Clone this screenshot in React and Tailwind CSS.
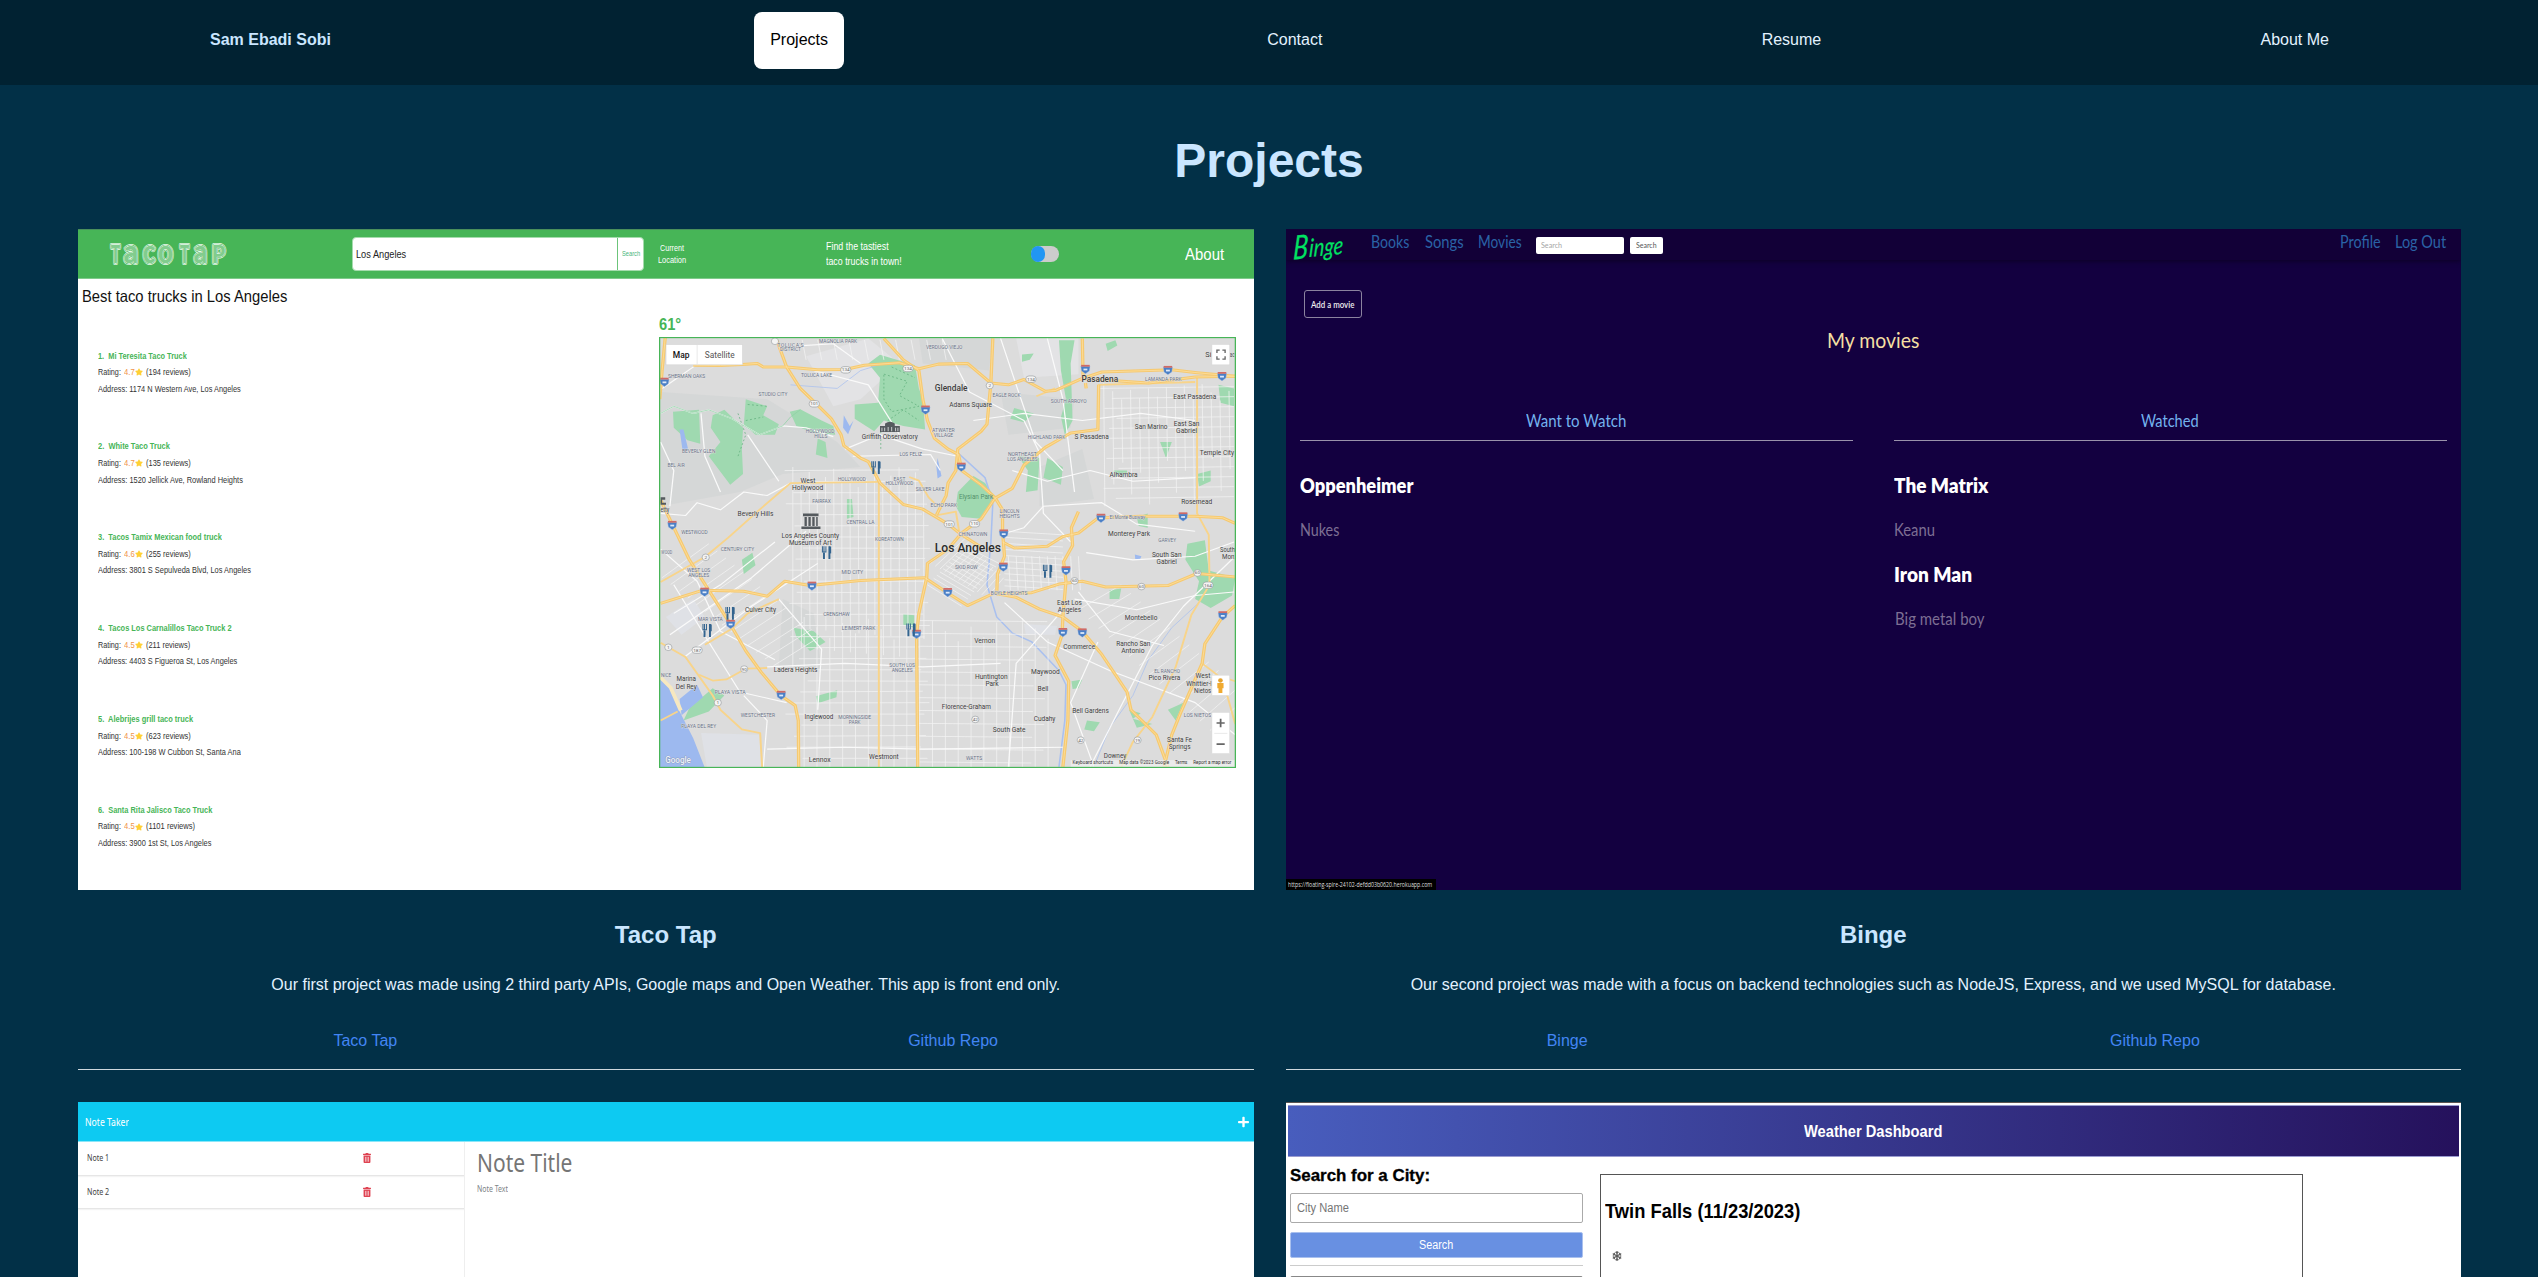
import { useLayoutEffect, useRef, useState } from "react";
import { FaStar, FaSnowflake, FaPlus, FaTrashAlt } from "react-icons/fa";

/* Single line of text condensed or widened to an exact width. */
function Fit({ w, className = "", children }) {
  const ref = useRef(null);
  const [scale, setScale] = useState(1);
  useLayoutEffect(() => {
    const natural = ref.current.offsetWidth;
    if (natural) setScale(w / natural);
  }, [w]);
  return (
    <span className={"block shrink-0 whitespace-pre " + className} style={{ width: w }}>
      <span ref={ref} className="inline-block origin-left align-top" style={{ transform: `scaleX(${scale})` }}>
        {children}
      </span>
    </span>
  );
}

/* ---------- Map drawing ---------- */

const freeways = [
  "M24 500 L30 420 L38 328",
  "M110 405 L180 406 L236 403 L275 400 L290 410 L350 410 L430 418 L500 417 L550 405 L640 398 L690 415 L740 402 L815 400 L875 455 L920 460 L960 445 L1015 478 L1040 476 L1110 442 L1160 424 L1340 418 L1405 426 L1503 436",
  "M1110 442 L1280 455 L1400 438 L1503 436",
  "M325 335 L350 410 L385 470 L425 512 L465 555 L490 600 L497 630 L540 665 L560 675 L590 735 L650 795 L700 808 L765 850 L800 880 L850 915",
  "M600 330 L650 390 L690 420 L700 500 L712 560 L730 610 L765 640 L792 655 L800 700 L850 740 L885 775 L905 810 L905 870 L910 940 L892 990 L890 1045 L940 1055 L1000 1088 L1060 1110 L1110 1150 L1160 1215 L1225 1320 L1235 1370 L1300 1440 L1330 1530",
  "M880 330 L875 455 L865 570 L850 590 L790 640 L785 700 L765 735 L760 770 L735 825",
  "M1110 330 L1112 440 M1118 455 L1120 470",
  "M1152 460 L1150 585 L1080 595 L1015 635 L960 685 L930 750 L885 778 L850 835 L800 875 L765 920 L712 960 L710 1000 L690 1100 L684 1160 L687 1530",
  "M26 1072 L135 1035 L240 1038 L300 1052 L345 1010 L410 1022 L540 1008 L705 1000 L760 1040 L815 1078 L880 1045",
  "M905 900 L935 917 L1020 912 L1060 885 L1100 875 L1150 833 L1260 828 L1400 828 L1470 832 L1503 848",
  "M890 1045 L980 1042 L1050 1018 L1110 1010 L1170 1026 L1330 1022 L1405 988 L1503 998",
  "M26 782 L58 855 L100 950 L150 1035 L205 1130 L245 1205 L285 1265 L335 1330 L372 1358 L380 1400 L381 1530",
  "M1100 815 L1082 860 L1085 910 L1062 955 L1068 1010 L1060 1110 L1058 1160 L1040 1218 L1075 1290 L1073 1400 L1060 1530",
  "M1503 1078 L1470 1110 L1425 1185 L1418 1240 L1362 1380 L1340 1440 L1320 1530",
];
const arterials = [
  "M1405 440 L1405 820 L1435 880 L1437 1020 L1390 1105 L1350 1250 L1290 1390 L1240 1460 L1210 1530",
  "M26 1182 L90 1222 L160 1330 L180 1370 L235 1425 L282 1435 L287 1530",
  "M125 1272 L160 1288 L195 1285 L245 1255 L300 1253",
  "M140 1188 L210 1142 L250 1100 L330 1060",
  "M587 732 L587 1530",
  "M26 1012 L140 942 L200 888 L280 810 L360 735 L590 732",
  "M665 718 L690 728 L715 775 L738 800 M738 825 L785 815 L795 880",
  "M1150 460 L1400 452",
  "M26 1400 L70 1375 M1418 1240 L1460 1275 L1503 1290",
  "M992 492 L1040 470",
  "M1480 1320 L1503 1410",
];
const whiteRoads = [
  "M26 540 L60 520 L110 540 L150 530 L210 555 L280 600 L340 575 L400 580 L470 605",
  "M390 350 L470 345 L540 400 M30 470 L130 395 M420 420 L560 460 L640 600",
  "M500 640 L590 600 L700 640 L790 660 M520 660 L720 655 L745 700",
  "M26 820 L90 826 L120 790 L180 810 L240 760 L300 770 L360 735",
  "M26 620 L60 700 L50 800 M130 540 L140 660 L180 760 M250 600 L330 730",
  "M750 330 L820 480 L960 560 L1000 650 M900 330 L940 460 L990 620 L1060 700",
  "M830 560 L960 540 L1110 560 L1260 540 L1400 560 M1020 330 L1060 500 L1090 760",
  "M930 700 L1020 730 L1130 700 L1240 730 L1400 720 M1000 650 L1010 820 L1080 900",
  "M900 880 L960 860 L1010 800 L1160 790 L1250 850 L1400 870",
  "M1120 930 L1240 950 L1400 940 L1500 900 M1090 1060 L1250 1090 L1400 1050 L1500 1040",
  "M910 1070 L1020 1180 L1180 1260 L1400 1350 L1503 1440 M1100 1040 L1180 1150 L1320 1190",
  "M1060 1090 L940 1240 L920 1530 M1150 1180 L1080 1350 L1140 1530",
  "M1130 1530 L1200 1380 L1290 1190 L1370 1080 L1503 940",
  "M26 920 L120 1010 L180 1150 L320 1230 M60 1020 L150 1180 L230 1320 L350 1350",
  "M60 1100 L180 1020 L320 900 M50 1160 L260 1000 L400 870 M90 1220 L260 1080 L430 960",
  "M330 1060 L440 1200 L430 1370 M300 1250 L500 1240 L700 1250 L900 1240",
  "M240 1330 L300 1400 L290 1530 M300 1480 L500 1475 L700 1480 L1060 1475",
];

function lines(list) {
  return list.map(([x1, y1, x2, y2]) => `M${x1} ${y1} L${x2} ${y2}`).join(" ");
}
const grid = [];
for (let i = 0; i < 17; i++) {
  const x = 366 + i * 21;
  grid.push([x, 690 + ((i * 37) % 60), x + (i % 3), 1250 - ((i * 53) % 110)]);
}
for (let i = 0; i < 20; i++) {
  const x = 395 + i * 33;
  grid.push([x, 1110 + ((i * 29) % 70), x, 1530]);
}
for (let i = 0; i < 27; i++) {
  const y = 700 + i * 31;
  grid.push([345 + ((i * 41) % 60), y, 690 + ((i * 17) % 30), y + (i % 4) - 2]);
}
for (let i = 0; i < 12; i++) {
  const y = 1120 + i * 36;
  grid.push([690, y, 1020 - ((i * 31) % 60), y + 3]);
}
for (let i = 0; i < 15; i++) {
  grid.push([1165 + i * 23, 455 + ((i * 23) % 50), 1168 + i * 23, 800 - ((i * 61) % 150)]);
}
for (let i = 0; i < 12; i++) {
  grid.push([1155 + ((i * 31) % 50), 470 + i * 28, 1500, 465 + i * 28]);
}
for (let i = 0; i < 13; i++) {
  grid.push([720 + i * 12, 960 + i * 8, 800 + i * 9, 880 + i * 10]);
  grid.push([712 + i * 8, 1020 - i * 9, 800 + i * 8, 1080 - i * 10]);
}
for (let i = 0; i < 14; i++) {
  grid.push([30 + i * 22, 1000 + i * 19, 150 + i * 22, 905 + i * 20]);
  grid.push([1100 + i * 26, 1090 + i * 26, 1210 + i * 25, 1020 + i * 24]);
}
for (let i = 0; i < 10; i++) {
  grid.push([390 + i * 40, 334, 400 + i * 40, 390]);
  grid.push([920 + i * 20, 940, 925 + i * 20, 1035]);
  grid.push([910, 870 + i * 17, 1060, 880 + i * 17]);
}

const towns = [
  [1155, 451, "Pasadena", 94, 25, 1], [773, 478, "Glendale", 84, 25, 1], [823, 523, "Adams Square", 110],
  [1399, 499, "East Pasadena", 110], [1287, 585, "San Marino", 84], [1378, 574, "East San", 66], [1378, 595, "Gabriel", 54],
  [1134, 613, "S Pasadena", 88], [1456, 657, "Temple City", 88], [1216, 718, "Alhambra", 72], [1404, 793, "Rosemead", 80],
  [405, 735, "West", 38], [404, 755, "Hollywood", 80], [270, 828, "Beverly Hills", 92], [411, 889, "Los Angeles County", 148],
  [411, 909, "Museum of Art", 110], [615, 612, "Griffith Observatory", 144], [1230, 884, "Monterey Park", 108],
  [1327, 942, "South San", 76], [1327, 961, "Gabriel", 52], [1483, 927, "South", 38], [1485, 947, "Mon", 32],
  [283, 1095, "Culver City", 80], [1077, 1077, "East Los", 64], [1077, 1097, "Angeles", 60], [1261, 1118, "Montebello", 84],
  [859, 1182, "Vernon", 54], [1102, 1199, "Commerce", 82], [1241, 1192, "Rancho San", 88], [1240, 1212, "Antonio", 60],
  [373, 1264, "Ladera Heights", 112], [1015, 1270, "Maywood", 74], [1009, 1316, "Bell", 28], [876, 1284, "Huntington", 84],
  [878, 1304, "Park", 34], [92, 1290, "Marina", 50], [92, 1311, "Del Rey", 54], [1321, 1287, "Pico Rivera", 82],
  [1420, 1282, "West", 38], [1410, 1303, "Whittier-l", 66], [1419, 1323, "Nietos", 44], [812, 1368, "Florence-Graham", 126],
  [1131, 1378, "Bell Gardens", 94], [1013, 1401, "Cudahy", 56], [922, 1432, "South Gate", 84], [433, 1397, "Inglewood", 74],
  [435, 1517, "Lennox", 56], [600, 1507, "Westmont", 76], [1360, 1460, "Santa Fe", 64], [1360, 1480, "Springs", 56],
  [1194, 1506, "Downey", 58], [1434, 381, "Si", 16], [1495, 381, "ac", 12], [37, 817, "etty", 22],
];
const hoods = [
  [360, 354, "TOLUCA'S", 68], [360, 366, "DISTRICT", 54], [482, 344, "MAGNOLIA PARK", 98], [755, 361, "VERDUGO VIEJO", 94],
  [93, 442, "SHERMAN OAKS", 96], [427, 437, "TOLUCA LAKE", 80], [315, 490, "STUDIO CITY", 74], [915, 493, "EAGLE ROCK", 72],
  [1318, 448, "LAMANDA PARK", 94], [1075, 511, "SOUTH ARROYO", 92], [436, 595, "HOLLYWOOD", 74], [438, 608, "HILLS", 34],
  [753, 592, "ATWATER", 58], [753, 606, "VILLAGE", 50], [1018, 612, "HIGHLAND PARK", 96], [124, 652, "BEVERLY GLEN", 86],
  [66, 691, "BEL AIR", 44], [669, 659, "LOS FELIZ", 58], [956, 659, "NORTHEAST", 74], [956, 673, "LOS ANGELES", 78],
  [518, 728, "HOLLYWOOD", 72], [640, 728, "EAST", 30], [640, 741, "HOLLYWOOD", 72], [719, 757, "SILVER LAKE", 74],
  [440, 791, "FAIRFAX", 48], [754, 802, "ECHO PARK", 68], [540, 851, "CENTRAL LA", 72], [923, 819, "LINCOLN", 50],
  [923, 832, "HEIGHTS", 52], [113, 877, "WESTWOOD", 68], [829, 883, "CHINATOWN", 74], [614, 896, "KOREATOWN", 74],
  [224, 926, "CENTURY CITY", 86], [1328, 900, "GARVEY", 46], [42, 935, "WOOD", 28], [812, 976, "SKID ROW", 58],
  [519, 989, "MID CITY", 56], [124, 984, "WEST LOS", 60], [124, 997, "ANGELES", 54], [922, 1048, "BOYLE HEIGHTS", 94],
  [478, 1106, "CRENSHAW", 68], [154, 1122, "MAR VISTA", 64], [535, 1146, "LEIMERT PARK", 86], [647, 1249, "SOUTH LOS", 66],
  [647, 1263, "ANGELES", 54], [1328, 1266, "EL RANCHO", 66], [205, 1325, "PLAYA VISTA", 80], [276, 1389, "WESTCHESTER", 88],
  [525, 1396, "MORNINGSIDE", 84], [525, 1409, "PARK", 30], [1406, 1390, "LOS NIETOS", 70], [124, 1420, "PLAYA DEL REY", 90],
  [832, 1511, "WATTS", 42], [1226, 836, "El Monte Busway", 92], [40, 1277, "NICE", 26],
];
const shields = [
  [36, 452], [1118, 416], [1330, 419], [1469, 436], [707, 530], [799, 690], [56, 853], [908, 877], [907, 970], [1158, 833],
  [1369, 829], [1068, 980], [139, 1040], [415, 1023], [764, 1041], [206, 1130], [684, 1158], [1060, 1153], [1110, 1154],
  [1471, 1106], [336, 1329],
];
const badges = [
  [320, 338, ""], [502, 418, "134"], [662, 414, "134"], [872, 462, "2"], [978, 444, "134"], [421, 513, "101"], [768, 850, "101"],
  [833, 849, "110"], [142, 943, "2"], [1406, 987, "60"], [1090, 1009, "60"], [1262, 1025, "60"], [1433, 1021, "164"],
  [46, 1195, "1"], [120, 1203, "187"], [241, 1256, "90"], [173, 1350, "1"], [835, 1397, "42"], [1106, 1455, "42"], [1252, 1455, "19"],
];
const forks = [[580, 692], [453, 930], [1021, 982], [205, 1100], [146, 1148], [670, 1146]];

function TacoMap() {
  return (
    <svg
      className="block h-[431px] w-[577px]"
      viewBox="22 326 1483 1207"
      preserveAspectRatio="none"
      fontFamily='Roboto, "Liberation Sans", sans-serif'
      textAnchor="middle"
    >
      <rect x="22" y="326" width="1483" height="1207" fill="#dcdcdc" />
      <g fill="#d5d7d7">
        <path d="M26 480 L300 500 L480 620 L540 690 L340 710 L230 760 L26 800Z" />
        <path d="M690 330 L880 330 L870 420 L700 400Z M900 480 L1090 500 L1080 580 L920 600Z M1000 690 L1110 640 L1140 780 L1000 800Z" />
        <path d="M340 1060 L420 1100 L440 1260 L330 1250Z" />
      </g>
      <g fill="#e3e3e5">
        <path d="M400 380 L560 330 L640 400 L540 500 L470 520Z M940 330 L1100 330 L1100 430 L960 440Z" />
      </g>
      <g fill="#dfe1e6">
        <path d="M130 1435 L280 1440 L285 1530 L145 1530Z M40 1110 L110 1060 L140 1110 L80 1160Z M960 1130 L1045 1135 L1040 1160 L965 1160Z" />
      </g>
      <g fill="#9fd9b0">
        <path d="M560 400 L590 376 L680 405 L690 470 L700 500 L706 585 L650 575 L600 560 L575 590 L525 555 L525 515 L585 510 L590 440Z" />
        <path d="M58 535 L125 530 L128 625 L95 615 L60 580Z M160 545 L190 530 L238 580 L235 640 L238 710 L205 740 L150 660 L180 620 L155 580Z" />
        <path d="M245 500 L300 520 L290 545 L330 570 L320 600 L270 600 L240 570Z M358 535 L385 528 L440 560 L470 575 L475 600 L420 595 L375 575Z M430 610 L450 620 L455 665 L425 655Z" />
        <path d="M790 760 L830 715 L860 735 L885 775 L850 835 L800 830 L785 800Z" />
        <path d="M1050 335 L1090 335 L1080 400 L1085 560 L1065 600 L1055 550 L1068 500 L1055 420Z" />
        <path d="M945 660 L1000 665 L995 755 L965 760 L970 700Z M1020 665 L1060 690 L1055 740 L1010 720Z M935 525 L985 540 L960 565 L925 555Z" />
        <path d="M1380 905 L1425 895 L1435 980 L1503 1000 L1495 1050 L1440 1085 L1400 1060 L1410 1010 L1375 950Z" />
        <path d="M1460 460 L1500 470 L1500 520 L1465 510Z M1310 620 L1340 620 L1325 665Z M1250 830 L1278 820 L1278 860 L1255 855Z M1180 1035 L1210 1030 L1205 1060 L1180 1060Z M1405 710 L1440 700 L1440 730 L1410 745Z" />
        <path d="M235 950 L262 930 L270 965 L240 990Z M650 1102 L678 1105 L678 1140 L650 1132Z M100 1365 L160 1310 L190 1330 L150 1375 L85 1400Z M368 1140 L420 1150 L450 1180 L420 1200 L410 1205 L375 1165Z" />
        <path d="M1122 1400 L1155 1405 L1140 1430 L1115 1425Z M425 1332 L480 1315 L478 1335 L430 1352Z M1082 1290 L1110 1285 L1100 1310 L1085 1312Z M1330 1370 L1370 1350 L1350 1400Z M1240 1395 L1290 1410 L1250 1420Z" />
        <path d="M1170 345 L1195 335 L1200 350 L1175 365Z M955 375 L985 372 L975 390 L955 395Z M505 780 L518 780 L522 830 L505 835Z M1190 700 L1225 700 L1225 712 L1190 715Z M1230 1370 L1260 1380 L1240 1395Z" />
      </g>
      <g fill="none" stroke="#5fae7c" strokeWidth="2" strokeDasharray="5 6">
        <path d="M600 430 L660 450 L640 490 L690 520 L620 535 L600 500Z M620 410 L680 440 M610 560 L650 530 L690 560 M592 590 L592 640" />
        <path d="M250 515 L300 520 M245 560 L290 550 M225 540 L245 600 L225 660" />
      </g>
      <g fill="#9db9ef">
        <path d="M22 1280 L50 1310 L75 1375 L110 1450 L140 1533 L22 1533Z" />
        <path d="M75 1340 L120 1300 L135 1335 L80 1385Z M75 585 L85 585 L98 645 L82 640Z M497 545 L512 575 L522 560 L508 598 L495 580Z M738 665 L748 715 L738 722 L735 690Z M1245 935 L1262 940 L1258 950 L1246 948Z" />
      </g>
      <path d="M22 1275 L52 1308 L78 1372" fill="none" stroke="#f7e8c0" strokeWidth="10" />
      <g fill="none" stroke="#a9c0ef" strokeWidth="4">
        <path d="M790 650 L860 720 L880 790 L875 900 L865 1020 L890 1110 L930 1155 L980 1180 L1050 1260 L1068 1300 L1065 1400 L1050 1530" />
        <path d="M1410 1070 L1340 1140 L1280 1230 L1240 1330 L1180 1420 L1140 1530 M360 460 L480 470 L540 420 L600 400" strokeWidth="2" />
      </g>
      <path d={lines(grid)} fill="none" stroke="#f3f3f3" strokeWidth="2" />
      <g fill="none" stroke="#fafafa" strokeWidth="3.2" strokeLinejoin="round">
        {whiteRoads.map((d) => <path key={d} d={d} />)}
      </g>
      <path d="M26 540 L60 520 L110 540 L150 530 L210 555 L280 600 L340 575 L360 550 L385 530" fill="none" stroke="#8fd2a5" strokeWidth="2" />
      <g fill="none" stroke="#f8d48a" strokeWidth="5" strokeLinejoin="round">
        {arterials.map((d) => <path key={d} d={d} />)}
      </g>
      <g fill="none" stroke="#f6c970" strokeWidth="8.5" strokeLinejoin="round">
        {freeways.map((d) => <path key={d} d={d} />)}
      </g>
      <g fill="none" stroke="#fde2a2" strokeWidth="2" strokeLinejoin="round">
        {freeways.map((d) => <path key={d} d={d} />)}
      </g>

      {badges.map(([x, y, t]) => (
        <g key={x + "-" + y}>
          <rect x={x - (t.length > 2 ? 13 : 9)} y={y - 9} width={t.length > 2 ? 26 : 18} height="18" rx="8" fill="#f4f4f4" stroke="#8a8f94" strokeWidth="1.5" />
          <text x={x} y={y + 4} fontSize="12" fill="#666">{t}</text>
        </g>
      ))}
      {shields.map(([x, y]) => (
        <g key={x + "-" + y}>
          <path d={`M${x - 12} ${y - 8} L${x + 12} ${y - 8} L${x + 10} ${y + 5} L${x} ${y + 13} L${x - 10} ${y + 5}Z`} fill="#4a7fc6" stroke="#b9cbe6" strokeWidth="1" />
          <path d={`M${x - 11} ${y - 12} h22 v5 h-22Z`} fill="#cf6a66" />
          <path d={`M${x - 5} ${y + 1} h10`} stroke="#dfe9f8" strokeWidth="5" />
        </g>
      ))}
      {forks.map(([x, y]) => (
        <g key={x + "-" + y} fill="none" stroke="#33648f" strokeWidth="5">
          <path d={`M${x - 7} ${y} V${y + 18} M${x + 7} ${y - 18} V${y + 18}`} />
          <path d={`M${x - 11} ${y - 18} V${y - 2} H${x - 2} V${y - 18} M${x - 7} ${y - 18} V${y}`} strokeWidth="2.6" />
          <path d={`M${x + 9} ${y - 17} V${y + 2}`} strokeWidth="5" />
        </g>
      ))}
      <g fill="#555a5e">
        <path d="M392 820 H432 V828 H392Z M396 830 H402 V855 H396Z M406 830 H412 V855 H406Z M416 830 H422 V855 H416Z M426 830 H430 V855 H426Z M388 857 H437 V864 H388Z" />
        <path d="M590 575 H603 V568 Q616 558 628 568 V575 H641 V592 H590Z" />
        <path d="M26 775 H38 V782 H30 V790 H40 V796 H26Z" />
      </g>
      <path d="M595 580 V590 M602 580 V590 M611 578 V590 M620 578 V590 M630 580 V590 M636 580 V590" stroke="#cfd2d4" strokeWidth="2.5" />

      <g fill="#687186" stroke="#e6e6e6" strokeWidth="2" paintOrder="stroke" fontSize="13.5">
        {hoods.map(([x, y, t, w]) => (
          <text key={x + t} x={x} y={y} textLength={w} lengthAdjust={w / t.length < 8.5 ? "spacingAndGlyphs" : "spacing"}>{t}</text>
        ))}
      </g>
      <g fill="#3c3c3c" stroke="#e6e6e6" strokeWidth="2" paintOrder="stroke">
        {towns.map(([x, y, t, w, s, b]) => (
          <text key={x + t} x={x} y={y} textLength={w} lengthAdjust="spacingAndGlyphs" fontSize={s || 21} fontWeight={b ? 500 : 400}>{t}</text>
        ))}
        <text x="816" y="929" textLength="170" lengthAdjust="spacingAndGlyphs" fontSize="36" fontWeight="500" fill="#2c2c2c">Los Angeles</text>
      </g>
      <text x="837" y="779" textLength="88" lengthAdjust="spacingAndGlyphs" fontSize="21" fill="#55916c">Elysian Park</text>

      <rect x="40" y="347" width="197" height="57" fill="#fff" stroke="#cfcfcf" strokeWidth="1.5" />
      <path d="M120 348 V403" stroke="#e2e2e2" strokeWidth="2" />
      <text x="79" y="384" textLength="43" lengthAdjust="spacingAndGlyphs" fontSize="27" fontWeight="500" fill="#111">Map</text>
      <text x="178" y="384" textLength="77" lengthAdjust="spacingAndGlyphs" fontSize="27" fill="#565656">Satellite</text>
      <rect x="1443" y="347" width="46" height="57" fill="#fff" stroke="#d6d6d6" strokeWidth="1.5" />
      <path d="M1456 371 V363 H1463 M1470 363 H1477 V371 M1477 380 V388 H1470 M1463 388 H1456 V380" fill="none" stroke="#666" strokeWidth="3.5" />
      <rect x="1443" y="1273" width="46" height="57" fill="#fff" stroke="#d6d6d6" strokeWidth="1.5" />
      <circle cx="1465" cy="1288" r="6" fill="#e5a22e" />
      <path d="M1457 1295 H1473 V1310 H1470 V1323 H1460 V1310 H1457Z" fill="#f0aa30" />
      <rect x="1443" y="1377" width="46" height="116" fill="#fff" stroke="#d6d6d6" strokeWidth="1.5" />
      <path d="M1449 1436 H1483" stroke="#e3e3e3" strokeWidth="2" />
      <path d="M1455 1407 H1476 M1465.500 1395 V1419 M1455 1466 H1476" stroke="#666" strokeWidth="4.500" />
      <rect x="1080" y="1511" width="423" height="19" fill="#f0f0f0" opacity=".75" />
      <g fontSize="14" fill="#333">
        <text x="1137" y="1523" textLength="104" lengthAdjust="spacingAndGlyphs">Keyboard shortcuts</text>
        <text x="1269" y="1523" textLength="128" lengthAdjust="spacingAndGlyphs">Map data ©2023 Google</text>
        <text x="1364" y="1523" textLength="32" lengthAdjust="spacingAndGlyphs">Terms</text>
        <text x="1444" y="1523" textLength="98" lengthAdjust="spacingAndGlyphs">Report a map error</text>
      </g>
      <text x="71" y="1518" textLength="66" lengthAdjust="spacingAndGlyphs" fontSize="27" fontWeight="500" fill="#eef2fb" stroke="#8490a8" strokeWidth="2" paintOrder="stroke">Google</text>
      <rect x="23.500" y="327.500" width="1480" height="1204" fill="none" stroke="#47b557" strokeWidth="3.500" />
    </svg>
  );
}

/* ---------- Taco Tap preview ---------- */

const trucks = [
  ["1.  Mi Teresita Taco Truck", 89, "4.7", "(194 reviews)", 45, "Address: 1174 N Western Ave, Los Angeles", 143],
  ["2.  White Taco Truck", 71.500, "4.7", "(135 reviews)", 45, "Address: 1520 Jellick Ave, Rowland Heights", 144.500],
  ["3.  Tacos Tamix Mexican food truck", 124, "4.6", "(255 reviews)", 45, "Address: 3801 S Sepulveda Blvd, Los Angeles", 152.500],
  ["4.  Tacos Los Carnalillos Taco Truck 2", 133.500, "4.5", "(211 reviews)", 44, "Address: 4403 S Figueroa St, Los Angeles", 139.500],
  ["5.  Alebrijes grill taco truck", 95, "4.5", "(623 reviews)", 45, "Address: 100-198 W Cubbon St, Santa Ana", 143],
  ["6.  Santa Rita Jalisco Taco Truck", 114.500, "4.5", "(1101 reviews)", 49, "Address: 3900 1st St, Los Angeles", 113],
];

/* letter, x, width, font size */
const logoLetters = [
  ["T", 2, 9, 24], ["a", 15, 14, 33], ["c", 34, 12, 33], ["o", 49, 15, 33],
  ["T", 71, 9, 24], ["a", 85, 13, 33], ["P", 103, 13, 24],
];

function TacoLogo() {
  const layers = [["#eefaf0", 3.8], ["#47b557", 2.5], ["#eefaf0", 1.3], ["#47b557", 0], ["#a9dcb1", 0]];
  return (
    <svg className="ml-[31px] block h-[40px] w-[120px] shrink-0 overflow-visible" viewBox="0 0 120 40" fontFamily="Lato, sans-serif" fontWeight="700">
      {layers.map(([c, sw], i) => (
        <g key={i} fill={c} stroke={c} strokeWidth={sw} strokeLinejoin="round" opacity={i === 4 ? 0.6 : 1}>
          {logoLetters.map(([t, x, w, s]) => (
            <text key={x} x={x} y="28.500" fontSize={s} textLength={w} lengthAdjust="spacingAndGlyphs">{t}</text>
          ))}
        </g>
      ))}
    </svg>
  );
}

function TacoShot() {
  return (
    <div className="h-[661px] overflow-hidden bg-white text-[#333]">
      <div className="flex h-[50px] items-center border-t border-b border-t-[#4a8f5b] border-b-[#7fcb8b] bg-[#47b557] text-white">
        <TacoLogo />
        <div className="ml-[123px] flex h-[34px] w-[292px] shrink-0 items-center rounded-[4px] border border-[#a5dbad] bg-white">
          <Fit w={50} className="ml-[3px] pt-px text-[10.500px] text-[#222]">Los Angeles</Fit>
          <div className="ml-auto flex h-full w-[26px] items-center justify-center border-l border-[#6cc47a]">
            <Fit w={18} className="text-[7px] text-[#47b57a]">Search</Fit>
          </div>
        </div>
        <div className="ml-[14px] flex w-[28px] shrink-0 flex-col items-center text-[9px] leading-[12.500px]">
          <Fit w={24}>Current</Fit>
          <Fit w={28}>Location</Fit>
        </div>
        <div className="ml-[140px] w-[77px] shrink-0 text-[10px] leading-[15px]">
          <Fit w={63}>Find the tastiest</Fit>
          <Fit w={76}>taco trucks in town!</Fit>
        </div>
        <div className="ml-[128px] h-[16px] w-[28px] shrink-0 rounded-full bg-[#ccc]">
          <div className="h-[16px] w-[14px] rounded-full bg-[#2196f3]" />
        </div>
        <Fit w={39} className="ml-[126px] pt-px text-[16.500px]">About</Fit>
      </div>
      <div className="pt-[5px] pl-[4px]">
        <Fit w={205} className="text-[16.500px] leading-[24px] text-[#111]">Best taco trucks in Los Angeles</Fit>
      </div>
      <div className="flex">
        <div className="flex w-[581px] shrink-0 flex-col gap-[41.100px] pt-[39.500px] pl-[20px] text-[8.800px] leading-[16.600px]">
          {trucks.map(([name, nw, rate, rev, rw, addr, aw]) => (
            <div key={name}>
              <Fit w={nw} className="font-bold text-[#47b557]">{name}</Fit>
              <div className="flex items-center">
                <Fit w={23}>Rating:</Fit>
                <Fit w={10.500} className="ml-[2.500px] text-[#f09448]">{rate}</Fit>
                <FaStar className="ml-[1px] size-[8px] text-[#ffd035]" />
                <Fit w={rw} className="ml-[3px]">{rev}</Fit>
              </div>
              <Fit w={aw}>{addr}</Fit>
            </div>
          ))}
        </div>
        <div className="pt-[6px]">
          <Fit w={22} className="pt-px text-[16px] leading-[19px] font-bold text-[#47b557]">61°</Fit>
          <div className="pt-[2.500px]">
            <TacoMap />
          </div>
        </div>
      </div>
    </div>
  );
}

/* ---------- Binge preview ---------- */

function BingeShot() {
  return (
    <div className="flex h-[661px] flex-col overflow-hidden bg-[#130040] font-[Lato,sans-serif]">
      <div className="flex h-[31px] shrink-0 text-[16.500px] leading-[20px] text-[#2a63a6] shadow-[0_1px_5px_#0c0024] bg-[#120037]">
        <svg className="ml-[6px] block h-[36px] w-[56px] shrink-0 overflow-visible" viewBox="0 0 56 36" fill="#00e262" stroke="#00e262" strokeWidth=".2" fontFamily="Lato, sans-serif" fontStyle="italic" fontWeight="400">
          <g transform="rotate(-5 28 20) skewX(-8)">
            <text x="4" y="28" fontSize="33" textLength="15" lengthAdjust="spacingAndGlyphs">B</text>
            <text x="20" y="27" fontSize="25" textLength="34" lengthAdjust="spacingAndGlyphs">inge</text>
          </g>
        </svg>
        <Fit w={38.500} className="mt-[3px] ml-[23.500px]">Books</Fit>
        <Fit w={38.500} className="mt-[3px] ml-[15px]">Songs</Fit>
        <Fit w={44} className="mt-[3px] ml-[14.500px]">Movies</Fit>
        <div className="mt-[8px] ml-[14px] flex h-[17px] w-[88px] shrink-0 items-center rounded-[2px] bg-white pl-[5.500px]">
          <Fit w={21.500} className="text-[8px] leading-[17px] text-[#a5a5a5]">Search</Fit>
        </div>
        <div className="mt-[8px] ml-[6px] flex h-[17px] w-[33px] shrink-0 items-center justify-center rounded-[2px] bg-white">
          <Fit w={21} className="text-[8px] leading-[17px] text-[#555]">Search</Fit>
        </div>
        <Fit w={41} className="mt-[3px] ml-auto">Profile</Fit>
        <Fit w={51} className="mt-[3px] mr-[15px] ml-[14px]">Log Out</Fit>
      </div>
      <div className="mt-[30px] ml-[18px] flex h-[28px] w-[58px] shrink-0 items-center justify-center rounded-[3px] border border-[#8b839f]">
        <Fit w={43} className="pt-px text-[9px] font-semibold text-[#eee]">Add a movie</Fit>
      </div>
      <div className="mt-[8px] flex justify-center">
        <Fit w={92.500} className="text-[21px] leading-[28px] text-[#f4dfa3]">My movies</Fit>
      </div>
      <div className="mt-[56px] ml-[14px] flex gap-[41px]">
        <div className="w-[553px]">
          <div className="flex justify-center border-b border-[#9a92ab] pb-[8px]">
            <Fit w={100} className="text-[17px] leading-[22px] text-[#74b3ee]">Want to Watch</Fit>
          </div>
          <Fit w={113} className="mt-[29px] text-[21px] leading-[30px] font-extrabold text-white">Oppenheimer</Fit>
          <Fit w={39.500} className="mt-[18px] text-[17px] leading-[24px] text-[#7d6f93]">Nukes</Fit>
        </div>
        <div className="w-[553px]">
          <div className="flex justify-center border-b border-[#9a92ab] pb-[8px]">
            <Fit w={57.500} className="text-[17px] leading-[22px] text-[#74b3ee]">Watched</Fit>
          </div>
          <Fit w={94} className="mt-[29px] text-[21px] leading-[30px] font-extrabold text-white">The Matrix</Fit>
          <Fit w={41} className="mt-[18px] text-[17px] leading-[24px] text-[#7d6f93]">Keanu</Fit>
          <Fit w={78} className="mt-[17px] text-[21px] leading-[30px] font-extrabold text-white">Iron Man</Fit>
          <Fit w={90} className="mt-[18px] ml-[1px] text-[17px] leading-[24px] text-[#7d6f93]">Big metal boy</Fit>
        </div>
      </div>
      <div className="mt-auto h-[11px] w-[150px] bg-black pl-[2.500px]">
        <Fit w={144} className="font-['Open_Sans',sans-serif] text-[7px] leading-[11px] text-[#dddddd]">https://floating-spire-24102-defdd03b0620.herokuapp.com</Fit>
      </div>
    </div>
  );
}

/* ---------- Note Taker preview ---------- */

function NoteShot() {
  return (
    <div className="h-[661px] overflow-hidden bg-white font-['Noto_Sans',sans-serif]">
      <div className="flex h-[40px] items-center border-b border-[#8be6f8] bg-[#0dcaf2] text-white">
        <Fit w={44} className="ml-[7px] pt-px text-[10px]">Note Taker</Fit>
        <FaPlus className="mr-[5px] ml-auto h-[12px] w-[11px]" preserveAspectRatio="none" />
      </div>
      <div className="flex h-full">
        <div className="h-full w-[387px] border-r border-[#eeeeee]">
          {["Note 1", "Note 2"].map((n) => (
            <div key={n} className="flex h-[33.500px] items-center border-b border-[#e6e6e6] pl-[9px] text-[#444] shadow-[0_1px_1px_#f4f4f4]">
              <Fit w={22.500} className="pt-px text-[8.500px]">{n}</Fit>
              <FaTrashAlt className="ml-[253px] h-[10px] w-[8px] text-[#df4352]" preserveAspectRatio="none" />
            </div>
          ))}
        </div>
        <div className="pt-[4px] pl-[11.500px]">
          <Fit w={95.500} className="text-[25.500px] leading-[32px] text-[#757575]">Note Title</Fit>
          <Fit w={31} className="mt-[5px] text-[8.500px] leading-[12px] text-[#7d8488]">Note Text</Fit>
        </div>
      </div>
    </div>
  );
}

/* ---------- Weather preview ---------- */

function WeatherShot() {
  return (
    <div className="h-[661px] overflow-hidden border-t border-[#5b5350] bg-white pt-[2px] text-black">
      <div className="mr-[2.500px] ml-[2px] flex h-[52px] items-center justify-center border-y border-[#9a9bd0] bg-[linear-gradient(90deg,#485dbd,#25115c)] text-white">
        <Fit w={138.500} className="pt-px text-[16px] font-bold">Weather Dashboard</Fit>
      </div>
      <div className="flex">
        <div className="ml-[4px] w-[293px] shrink-0 pt-[9px]">
          <Fit w={139.500} className="text-[16px] leading-[20px] font-bold [-webkit-text-stroke:0.3px_black]">Search for a City:</Fit>
          <div className="mt-[7px] flex h-[30px] items-center rounded-[2px] border border-[#aaaaaa] pl-[6px]">
            <Fit w={51.500} className="text-[12.500px] text-[#757575]">City Name</Fit>
          </div>
          <div className="mt-[9px] flex h-[26px] items-center justify-center rounded-[2px] border border-[#a9c0ee] bg-[#6890e2]">
            <Fit w={34.500} className="text-[12.500px] text-white">Search</Fit>
          </div>
          <div className="mt-[7px] h-px bg-[#cccccc]" />
          <div className="mt-[10px] h-[26px] rounded-[2px] border border-[#888888] bg-[#acacac]" />
        </div>
        <div className="mt-[17px] ml-[17px] h-[500px] w-[703px] border border-[#555] pl-[4px]">
          <Fit w={195} className="mt-[22px] text-[20.500px] leading-[28px] font-bold">Twin Falls (11/23/2023)</Fit>
          <FaSnowflake className="mt-[26px] ml-[7px] size-[10px] text-[#5c5c5c]" />
        </div>
      </div>
    </div>
  );
}

/* ---------- Page ---------- */

function Project({ title, text, link, Shot }) {
  return (
    <article>
      <Shot />
      <h2 className="mt-[29px] text-center text-2xl leading-8 font-bold text-[#cae6ff]">{title}</h2>
      <p className="mt-[22px] text-center text-base">{text}</p>
      <div className="mt-8 flex justify-around text-[#4285f4]">
        <a>{link}</a>
        <a>Github Repo</a>
      </div>
      <hr className="mt-4 border-[#cfd8dd]" />
    </article>
  );
}

const projects = [
  {
    title: "Taco Tap", link: "Taco Tap", Shot: TacoShot,
    text: "Our first project was made using 2 third party APIs, Google maps and Open Weather. This app is front end only.",
  },
  {
    title: "Binge", link: "Binge", Shot: BingeShot,
    text: "Our second project was made with a focus on backend technologies such as NodeJS, Express, and we used MySQL for database.",
  },
  { title: "Note Taker", link: "Note Taker", text: "A small app for writing and saving notes.", Shot: NoteShot },
  { title: "Weather Dashboard", link: "Weather Dashboard", text: "Five day forecast for any city.", Shot: WeatherShot },
];

export default function App() {
  return (
    <div className="h-[1277px] w-[2538px] overflow-hidden bg-[#023047] font-['Liberation_Sans',Arial,sans-serif] text-base text-[#e3f2ff]">
      <nav className="flex h-[85px] items-start justify-between bg-[#012232] pt-3 pr-[193px] pl-[194px]">
        <a className="px-4 pt-4 font-bold text-[#cae6ff]">Sam Ebadi Sobi</a>
        <a className="h-[57px] rounded-lg bg-white px-4 pt-4 text-black">Projects</a>
        <a className="px-4 pt-4">Contact</a>
        <a className="px-4 pt-4">Resume</a>
        <a className="px-4 pt-4">About Me</a>
      </nav>
      <h1 className="mt-[52px] text-center text-5xl leading-none font-bold text-[#cae6ff]">Projects</h1>
      <main className="mt-[44px] grid grid-cols-2 gap-8 pr-[77px] pl-[78px]">
        {projects.map((p) => <Project key={p.title} {...p} />)}
      </main>
    </div>
  );
}
